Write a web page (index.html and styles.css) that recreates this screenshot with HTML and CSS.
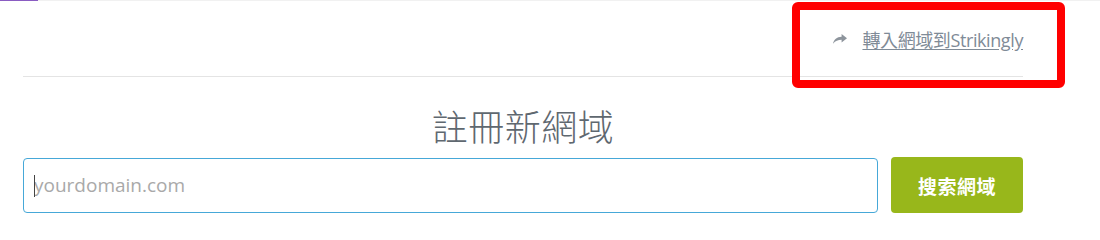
FILE: index.html
```html
<!DOCTYPE html>
<html lang="zh-Hant">
<head>
<meta charset="utf-8">
<title>註冊新網域</title>
<link rel="stylesheet" href="styles.css">
</head>
<body>
<div class="progress"><div class="progress-fill"></div></div>
<div class="panel">
  <div class="header">
    <a class="transfer" href="#">
      <svg class="share-icon" width="14" height="10" viewBox="0 0 14 10" aria-hidden="true"><path d="M8.6 0 L14 4.2 L8.6 8.4 V5.8 C5 5.8 2.4 6.8 0 9.8 C0.8 5.4 3.8 2.9 8.6 2.7 Z" fill="#8d949c"/></svg>
      <span class="transfer-text">轉入網域到Strikingly</span>
    </a>
  </div>
  <h1 class="title">註冊新網域</h1>
  <form class="search" onsubmit="return false">
    <div class="field"><span class="caret"></span><input class="domain" type="text" placeholder="yourdomain.com"></div>
    <button class="btn" type="submit">搜索網域</button>
  </form>
</div>
<div class="highlight"></div>
</body>
</html>
```

FILE: styles.css
```css
html, body {
  margin: 0;
  padding: 0;
  background: #ffffff;
}
body {
  font-family: "Open Sans", "Noto Sans CJK TC", sans-serif;
  position: relative;
  width: 1100px;
  height: 235px;
  overflow: hidden;
}
.progress {
  height: 1px;
  background: #f1f1f1;
}
.progress-fill {
  width: 38px;
  height: 1px;
  background: #8a5cc2;
}
.panel {
  width: 1000px;
  margin-left: 23px;
}
.header {
  height: 74px;
  border-bottom: 1px solid #e4e4e4;
  display: flex;
  justify-content: flex-end;
  align-items: center;
  padding-bottom: 1px;
  box-sizing: content-box;
}
.transfer {
  display: flex;
  align-items: center;
  gap: 15px;
  color: #7f8b97;
  text-decoration: none;
  font-size: 18px;
  margin-top: 2px;
}
.share-icon {
  display: block;
  margin-top: 0;
}
.transfer-text {
  text-decoration: underline;
  text-underline-offset: 2px;
  letter-spacing: -0.4px;
}
.title {
  margin: 26px 0 0;
  text-align: center;
  font-family: "Noto Sans CJK TC", sans-serif;
  font-weight: 300;
  font-size: 36px;
  line-height: 44px;
  color: #5f6870;
  letter-spacing: 0.5px;
}
.search {
  display: flex;
  align-items: center;
  gap: 13px;
  margin-top: 10px;
}
.field {
  position: relative;
  flex: 0 0 855px;
}
.domain {
  display: block;
  width: 100%;
  box-sizing: border-box;
  height: 55px;
  border: 1px solid #46a8d8;
  border-radius: 4px;
  padding: 0 10px;
  font-family: "Open Sans", sans-serif;
  font-size: 19px;
  color: #333;
  outline: none;
  background: #fff;
}
.domain::placeholder {
  color: #a9a9a9;
}
.caret {
  position: absolute;
  left: 11px;
  top: 17px;
  width: 1px;
  height: 22px;
  background: #444;
}
.btn {
  width: 132px;
  height: 56px;
  border: none;
  border-radius: 4px;
  background: #98b71b;
  color: #ffffff;
  font-family: "Noto Sans CJK TC", sans-serif;
  font-weight: 700;
  font-size: 19px;
  letter-spacing: 0.5px;
  padding: 0;
  cursor: pointer;
}
.highlight {
  position: absolute;
  left: 792px;
  top: 2px;
  width: 273px;
  height: 86px;
  box-sizing: border-box;
  border: 8px solid #ff0000;
  border-radius: 6px;
}
```
